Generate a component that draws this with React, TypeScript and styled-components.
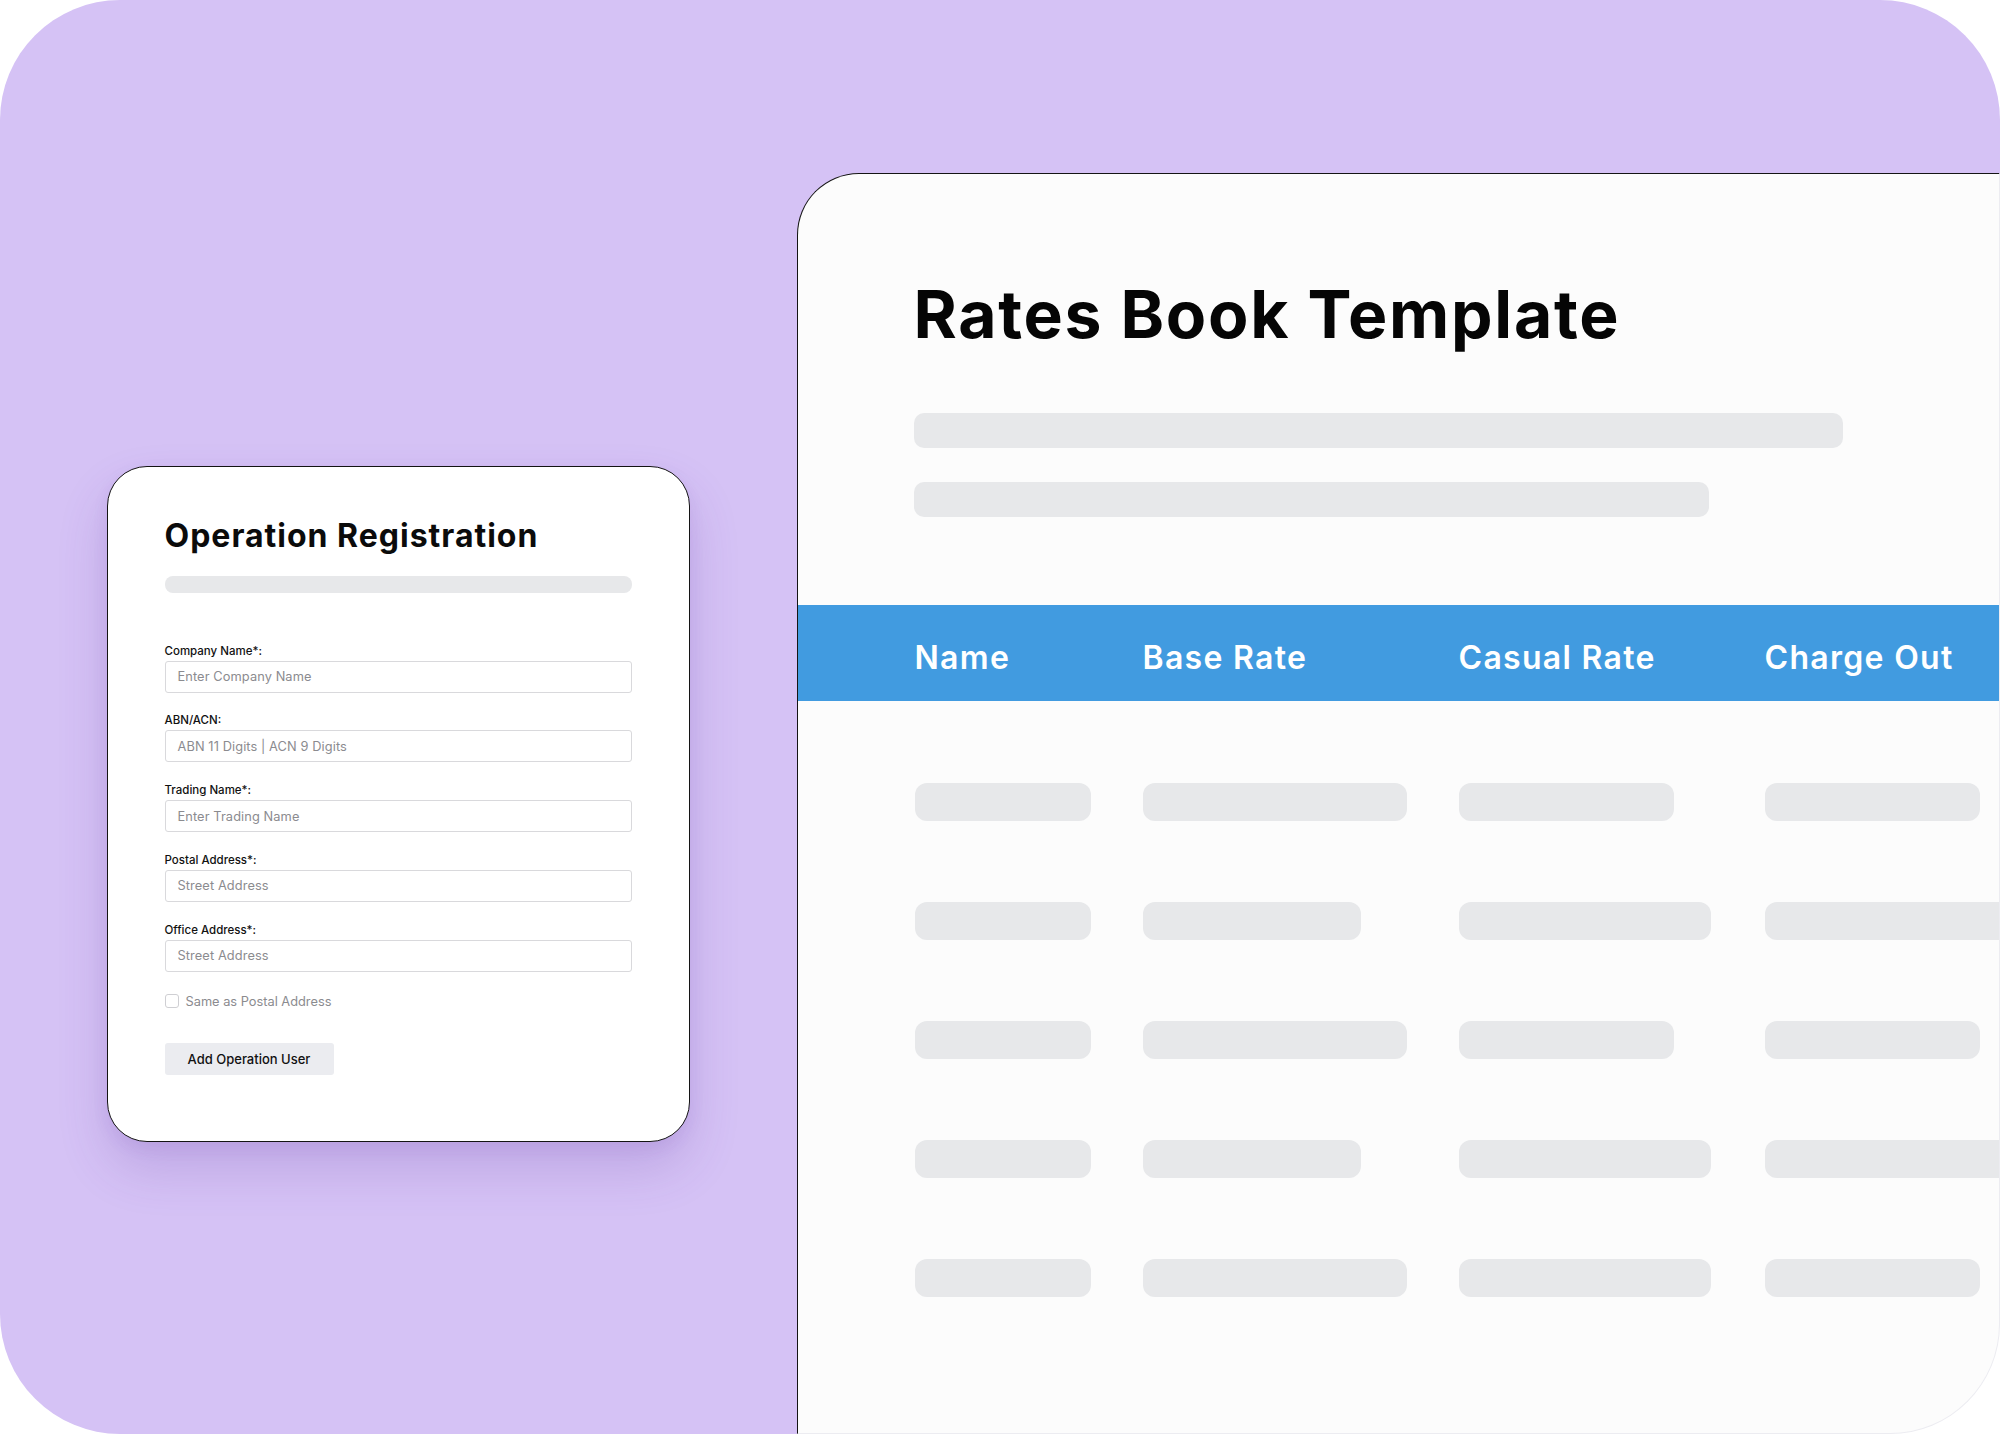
import React from "react";
import styled, { createGlobalStyle } from "styled-components";

const GlobalStyle = createGlobalStyle`
  html, body {
    margin: 0;
    padding: 0;
    background: #ffffff;
  }
  body {
    font-family: Inter, "Noto Sans", "Liberation Sans", sans-serif;
    -webkit-font-smoothing: antialiased;
  }
  * { box-sizing: border-box; }
`;

const Stage = styled.div`
  width: 2000px;
  height: 1434px;
  background: #d5c2f5;
  border-radius: 120px;
  display: flex;
  align-items: flex-start;
  padding-left: 107px;
  gap: 107px;
`;

/* ---------- left form card ---------- */

const Card = styled.section`
  width: 583px;
  margin-top: 466px;
  background: #ffffff;
  border: 1.5px solid #141414;
  border-radius: 40px;
  padding: 53px 57px 66px 56.5px;
  display: flex;
  flex-direction: column;
  box-shadow: 0 26px 50px rgba(96, 56, 160, 0.2), 0 6px 16px rgba(96, 56, 160, 0.08);
  flex-shrink: 0;
`;

const CardTitle = styled.h2`
  margin: 0;
  font-size: 32px;
  line-height: 32px;
  font-weight: 650;
  color: #0b0b0b;
  letter-spacing: 1px;
`;

const Skeleton = styled.div<{ $w?: string; $h: number; $r: number; $mt?: number }>`
  width: ${(p) => p.$w ?? "100%"};
  height: ${(p) => p.$h}px;
  border-radius: ${(p) => p.$r}px;
  background: #e7e8ea;
  margin-top: ${(p) => p.$mt ?? 0}px;
  flex-shrink: 0;
`;

const Fields = styled.div`
  margin-top: 51px;
  display: flex;
  flex-direction: column;
  gap: 20.8px;
`;

const Field = styled.label`
  display: flex;
  flex-direction: column;
  gap: 2px;
`;

const FieldLabel = styled.span`
  font-size: 11.5px;
  line-height: 15px;
  font-weight: 500;
  color: #111111;
`;

const Input = styled.div`
  height: 32px;
  border: 1px solid #d9d9dc;
  border-radius: 3px;
  padding: 0 12px;
  display: flex;
  align-items: center;
  font-size: 12.8px;
  letter-spacing: 0.1px;
  color: #8b8b8f;
  background: #ffffff;
`;

const CheckRow = styled.div`
  margin-top: 22px;
  display: flex;
  align-items: center;
  gap: 7px;
  height: 15px;
`;

const CheckBox = styled.span`
  width: 14px;
  height: 14px;
  border: 1px solid #cfcfd3;
  border-radius: 3px;
  background: #ffffff;
`;

const CheckLabel = styled.span`
  font-size: 12.8px;
  line-height: 15px;
  color: #8b8b8f;
`;

const Button = styled.button`
  margin-top: 34px;
  align-self: flex-start;
  height: 32px;
  width: 169px;
  border: none;
  border-radius: 3px;
  background: #ebecf0;
  font-family: inherit;
  font-size: 13px;
  font-weight: 500;
  color: #111111;
  padding: 0;
`;

/* ---------- right rates panel ---------- */

const Panel = styled.section`
  flex: 1;
  align-self: stretch;
  margin-top: 173px;
  background: #fcfcfc;
  border-top: 1.5px solid #141414;
  border-left: 1.5px solid #141414;
  border-right: 1px solid #ececf1;
  border-bottom: 1px solid #ececf1;
  border-top-left-radius: 62px;
  border-bottom-right-radius: 110px;
  overflow: hidden;
  display: flex;
  flex-direction: column;
`;

const Intro = styled.div`
  padding: 106.5px 0 0 115.5px;
  display: flex;
  flex-direction: column;
`;

const PanelTitle = styled.h1`
  margin: 0;
  font-size: 66px;
  line-height: 66px;
  font-weight: 700;
  color: #050505;
  letter-spacing: 1.7px;
`;

const TableHeader = styled.div`
  margin-top: 88px;
  height: 96px;
  background: #419be0;
  padding: 37px 0 0 116.5px;
  display: grid;
  grid-template-columns: 228px 316px 306px 1fr;
`;

const HeaderCell = styled.span`
  font-size: 32px;
  line-height: 32px;
  font-weight: 600;
  color: #ffffff;
  letter-spacing: 1.3px;
  white-space: nowrap;
`;

const Rows = styled.div`
  padding: 82px 0 0 116.5px;
  display: flex;
  flex-direction: column;
  gap: 81px;
`;

const Row = styled.div`
  display: grid;
  grid-template-columns: 228px 316px 306px 1fr;
`;

const headers = ["Name", "Base Rate", "Casual Rate", "Charge Out"];

const rowWidths = [
  [176, 264, 215, 215],
  [176, 218, 252, 320],
  [176, 264, 215, 215],
  [176, 218, 252, 320],
  [176, 264, 252, 215],
];

const fields = [
  { label: "Company Name*:", placeholder: "Enter Company Name" },
  { label: "ABN/ACN:", placeholder: "ABN 11 Digits | ACN 9 Digits" },
  { label: "Trading Name*:", placeholder: "Enter Trading Name" },
  { label: "Postal Address*:", placeholder: "Street Address" },
  { label: "Office Address*:", placeholder: "Street Address" },
];

export default function App() {
  return (
    <>
      <GlobalStyle />
      <Stage>
        <Card>
          <CardTitle>Operation Registration</CardTitle>
          <Skeleton $h={17} $r={8} $mt={23.5} />
          <Fields>
            {fields.map((f) => (
              <Field key={f.label}>
                <FieldLabel>{f.label}</FieldLabel>
                <Input>{f.placeholder}</Input>
              </Field>
            ))}
          </Fields>
          <CheckRow>
            <CheckBox />
            <CheckLabel>Same as Postal Address</CheckLabel>
          </CheckRow>
          <Button type="button">Add Operation User</Button>
        </Card>

        <Panel>
          <Intro>
            <PanelTitle>Rates Book Template</PanelTitle>
            <Skeleton $w="929px" $h={35} $r={10} $mt={66} />
            <Skeleton $w="795px" $h={35} $r={10} $mt={34} />
          </Intro>
          <TableHeader>
            {headers.map((h) => (
              <HeaderCell key={h}>{h}</HeaderCell>
            ))}
          </TableHeader>
          <Rows>
            {rowWidths.map((r, i) => (
              <Row key={i}>
                {r.map((w, j) => (
                  <Skeleton key={j} $w={`${w}px`} $h={38} $r={12} />
                ))}
              </Row>
            ))}
          </Rows>
        </Panel>
      </Stage>
    </>
  );
}
